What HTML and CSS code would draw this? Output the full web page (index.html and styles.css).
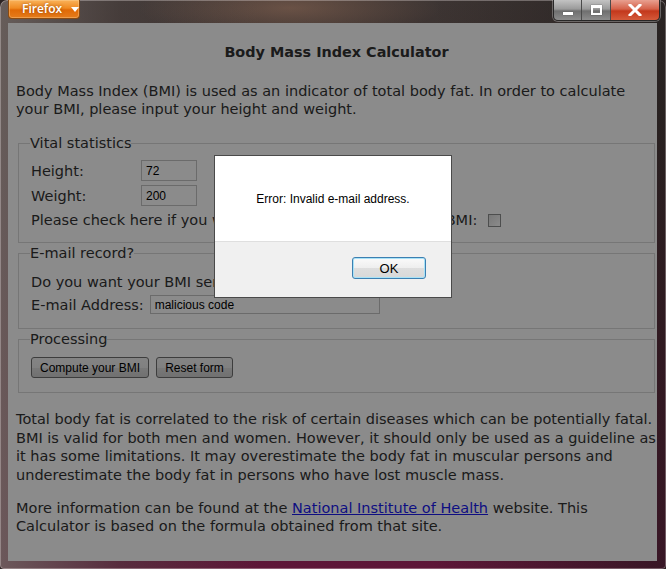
FILE: index.html
```html
<!DOCTYPE html>
<html>
<head>
<meta charset="utf-8">
<title>Body Mass Index Calculator</title>
<link rel="stylesheet" href="styles.css">
</head>
<body>
<div class="window">
  <div class="titlebar">
    <div class="ffbtn"><span class="fftext">Firefox</span><span class="caret"></span></div>
    <div class="controls">
      <div class="ctl ctl-min"><span class="min-icon"></span></div>
      <div class="ctl ctl-max"><span class="max-icon"></span></div>
      <div class="ctl ctl-close">
        <svg width="14" height="12" viewBox="0 0 14 12"><path d="M2 1 L12 11 M12 1 L2 11" stroke="#fff" stroke-width="3" stroke-linecap="square"/></svg>
      </div>
    </div>
  </div>
  <div class="viewport">
    <div class="page">
      <h1 class="title">Body Mass Index Calculator</h1>
      <p class="intro">Body Mass Index (BMI) is used as an indicator of total body fat. In order to calculate<br>your BMI, please input your height and weight.</p>
      <form class="form">
        <fieldset class="group group-vital">
          <legend class="legend">Vital statistics</legend>
          <div class="grid">
            <label class="lbl">Height:</label>
            <input class="field field-small" type="text" value="72" readonly>
            <label class="lbl">Weight:</label>
            <input class="field field-small" type="text" value="200" readonly>
          </div>
          <div class="row row-check">Please check here if you want a precise interpretation of BMI: <span class="checkbox"></span></div>
        </fieldset>
        <fieldset class="group group-email">
          <legend class="legend">E-mail record?</legend>
          <div class="row row-ask">Do you want your BMI sent to you by e-mail?</div>
          <div class="row row-email"><label class="lbl">E-mail Address:</label><input class="field field-email" type="text" value="malicious code" readonly></div>
        </fieldset>
        <fieldset class="group group-proc">
          <legend class="legend">Processing</legend>
          <div class="buttons">
            <button type="button" class="btn btn-compute">Compute your BMI</button>
            <button type="button" class="btn btn-reset">Reset form</button>
          </div>
        </fieldset>
      </form>
      <p class="info">Total body fat is correlated to the risk of certain diseases which can be potentially fatal.<br>BMI is valid for both men and women. However, it should only be used as a guideline as<br>it has some limitations. It may overestimate the body fat in muscular persons and<br>underestimate the body fat in persons who have lost muscle mass.</p>
      <p class="more">More information can be found at the <a class="link" href="#">National Institute of Health</a> website. This<br>Calculator is based on the formula obtained from that site.</p>
    </div>
    <div class="overlay"></div>
    <div class="dialog">
      <div class="dialog-body">Error: Invalid e-mail address.</div>
      <div class="dialog-foot"><button type="button" class="okbtn">OK</button></div>
    </div>
  </div>
</div>
</body>
</html>
```

FILE: styles.css
```css
html, body {
  margin: 0;
  padding: 0;
  width: 666px;
  height: 569px;
  overflow: hidden;
  background: #2a2222;
}

.window {
  position: relative;
  width: 666px;
  height: 569px;
  box-sizing: border-box;
  border-radius: 7px 7px 4px 4px;
  background:
    radial-gradient(150px 32px at 290px 8px, rgba(150,110,88,0.5), rgba(150,110,88,0)),
    linear-gradient(to right, rgba(110,100,97,0.85) 0px, rgba(80,70,68,0.45) 120px, rgba(60,50,46,0) 260px),
    linear-gradient(to right, rgba(0,0,0,0) 65%, rgba(25,22,22,0.55) 100%),
    linear-gradient(to bottom, #3d3533 0px, #3a2e2d 120px, #4c1c2e 360px, #5e1738 569px);
  box-shadow: inset 0 0 0 1px rgba(230,220,220,0.35);
  display: flex;
  flex-direction: column;
}

.titlebar {
  height: 23px;
  display: flex;
  align-items: flex-start;
  padding-left: 8px;
  padding-right: 6px;
  flex: none;
}

.ffbtn {
  width: 72px;
  height: 19px;
  box-sizing: border-box;
  border: 1px solid #8a4a10;
  border-top: none;
  border-radius: 0 0 4px 4px;
  background: linear-gradient(to bottom, #f9b25a 0%, #f08b22 45%, #e06a06 55%, #e57c1c 100%);
  box-shadow: inset 0 0 0 1px rgba(255,220,170,0.35);
  display: flex;
  align-items: center;
  padding-left: 13px;
  gap: 9px;
}

.fftext {
  font-family: "Open Sans", "DejaVu Sans", sans-serif;
  font-weight: 600;
  font-size: 12px;
  color: #fff;
  text-shadow: 0 0 3px rgba(120,50,0,0.7);
  line-height: 1;
  margin-top: -1px;
}

.caret {
  width: 0;
  height: 0;
  border-left: 4px solid transparent;
  border-right: 4px solid transparent;
  border-top: 5px solid #fff;
  margin-top: 1px;
}

.controls {
  margin-left: auto;
  display: flex;
  height: 20px;
  border: 1px solid rgba(40,40,40,0.9);
  border-top: none;
  border-radius: 0 0 5px 5px;
  overflow: hidden;
  box-shadow: 0 0 0 1px rgba(220,220,220,0.35);
}

.ctl {
  height: 20px;
  display: flex;
  align-items: center;
  justify-content: center;
  box-sizing: border-box;
}

.ctl-min, .ctl-max {
  width: 28px;
  background: linear-gradient(to bottom, #c3c3c3 0%, #9a9a9a 45%, #6f6f6f 55%, #8c8c8c 100%);
  border-right: 1px solid #4a4a4a;
}

.ctl-max { width: 29px; }

.ctl-close {
  width: 48px;
  background: linear-gradient(to bottom, #e8a090 0%, #d5624a 45%, #c3381c 55%, #d45a3a 100%);
}

.min-icon {
  width: 10px;
  height: 3px;
  background: #fff;
  margin-top: 6px;
  box-shadow: 0 0 1px rgba(0,0,0,0.6);
}

.max-icon {
  width: 7px;
  height: 5px;
  border: 2px solid #fff;
  border-top-width: 3px;
  box-shadow: 0 0 1px rgba(0,0,0,0.6);
}

.viewport {
  position: relative;
  margin-left: 8px;
  width: 649px;
  height: 538px;
  overflow: hidden;
  background: #fff;
  flex: none;
}

.page {
  padding: 8px 0 0 8px;
  font-family: "DejaVu Sans", Verdana, sans-serif;
  font-size: 14.5px;
  line-height: 18px;
  color: #333;
}

.title {
  font-size: 14.4px;
  font-weight: bold;
  text-align: center;
  margin: 12px 0 21px;
  line-height: 18px;
}

.intro { margin: 0; }

.form { margin: 0; }

.group {
  margin: 16px 2px 0;
  border: 1px solid #d9d9d9;
  padding: 0 11px 13px;
  min-width: 0;
}

.group-email { margin-top: 1px; padding-bottom: 14px; }
.group-proc { margin-top: 1px; padding-bottom: 14px; }

.legend {
  padding: 0;
  font-size: 14.5px;
  line-height: 18px;
}

.grid {
  display: grid;
  grid-template-columns: 111px 56px;
  row-gap: 4px;
  align-items: center;
  margin-top: 8px;
}

.lbl { padding-left: 1px; }

.field {
  box-sizing: border-box;
  border: 1px solid #c4c4c4;
  background: #fff;
  font-family: "Liberation Sans", Arial, sans-serif;
  font-size: 12px;
  color: #000;
  padding: 0 4px;
  margin: 0;
  outline: none;
}

.field-small { width: 56px; height: 21px; }

.row-check {
  margin-top: 5px;
  padding-left: 1px;
  display: flex;
  align-items: center;
  white-space: nowrap;
}

.checkbox {
  width: 13px;
  height: 13px;
  box-sizing: border-box;
  border: 1px solid #8e8f8f;
  background: linear-gradient(135deg, #dcdcdc, #ffffff);
  margin-left: 11px;
  display: inline-block;
  flex: none;
}

.row-ask { margin-top: 11px; padding-left: 1px; white-space: nowrap; }

.row-email {
  display: flex;
  align-items: center;
  margin-top: 4px;
}

.field-email {
  width: 230px;
  height: 19px;
  margin-left: 6px;
}

.buttons {
  display: flex;
  gap: 7px;
  margin-top: 9px;
  padding-left: 1px;
}

.btn {
  height: 21px;
  box-sizing: border-box;
  border: 1px solid #707070;
  border-radius: 3px;
  background: linear-gradient(to bottom, #f2f2f2 0%, #ebebeb 50%, #dddddd 51%, #cfcfcf 100%);
  font-family: "Liberation Sans", Arial, sans-serif;
  font-size: 12px;
  color: #000;
  padding: 0;
  margin: 0;
  white-space: nowrap;
}

.btn-compute { width: 118px; }
.btn-reset { width: 77px; }

.info { margin: 17px 0 0; line-height: 18.5px; }
.more { margin: 15px 0 0; }

.link { color: #1a1aee; }

.overlay {
  position: absolute;
  inset: 0;
  background-color: rgba(0,0,0,0.455);
}

.dialog {
  position: absolute;
  left: 206px;
  top: 132px;
  width: 238px;
  height: 143px;
  box-sizing: border-box;
  border: 1px solid #4a4a4a;
  background: #f0f0f0;
  display: flex;
  flex-direction: column;
}

.dialog-body {
  height: 85px;
  background: #fff;
  border-bottom: 1px solid #dfdfdf;
  display: flex;
  align-items: center;
  justify-content: center;
  font-family: "Liberation Sans", Arial, sans-serif;
  font-size: 12px;
  color: #000;
}

.dialog-foot {
  flex: 1;
  display: flex;
  justify-content: flex-end;
  align-items: flex-start;
  padding: 15px 25px 0 0;
}

.okbtn {
  width: 74px;
  height: 22px;
  box-sizing: border-box;
  border: 1px solid #3c7fb1;
  border-radius: 3px;
  background: linear-gradient(to bottom, #fafafa 0%, #eeeeee 50%, #dedede 51%, #d8d8d8 100%);
  box-shadow: inset 0 0 0 1px #a8e2f7;
  font-family: "Liberation Sans", Arial, sans-serif;
  font-size: 13px;
  color: #000;
  padding: 0;
  margin: 0;
}
```
